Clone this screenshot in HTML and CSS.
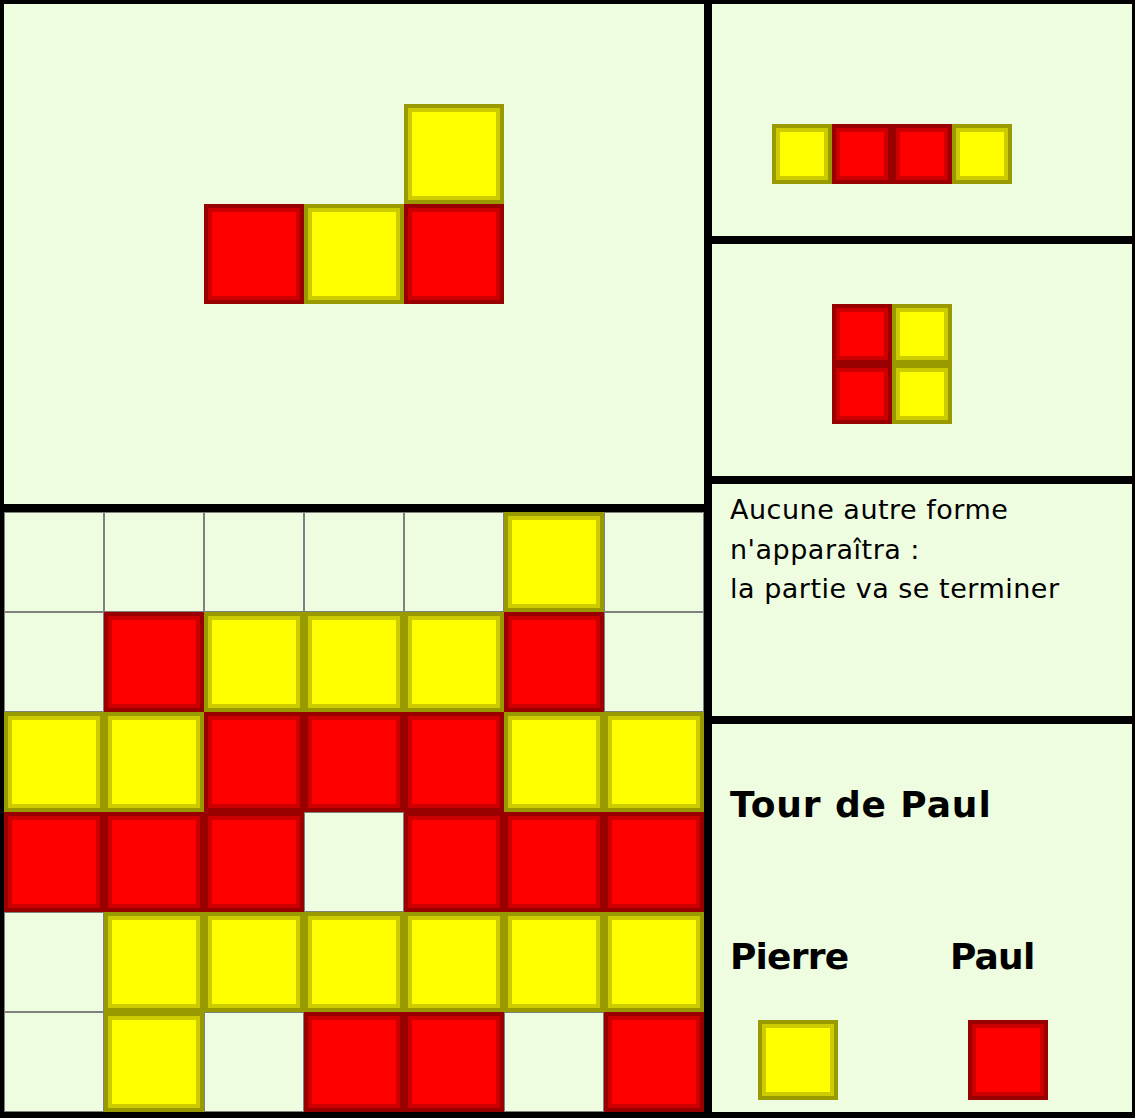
FILE: index.html
```html
<!DOCTYPE html>
<html lang="fr">
<head>
    <meta charset="UTF-8">
    <meta name="viewport" content="width=device-width, initial-scale=1.0">
    <title>Puissance Formes</title>
    <link rel="stylesheet" href="styles.css">
</head>
<body>
    <div class="window">
        <div class="left">
            <!-- forme courante -->
            <div class="panel current">
                <div class="tile yellow" style="grid-column: 5; grid-row: 2;"></div>
                <div class="tile red" style="grid-column: 3; grid-row: 3;"></div>
                <div class="tile yellow" style="grid-column: 4; grid-row: 3;"></div>
                <div class="tile red" style="grid-column: 5; grid-row: 3;"></div>
            </div>

            <!-- plateau -->
            <div class="panel board">
                <div class="cell"></div><div class="cell"></div><div class="cell"></div><div class="cell"></div><div class="cell"></div><div class="tile yellow"></div><div class="cell"></div>
                <div class="cell"></div><div class="tile red"></div><div class="tile yellow"></div><div class="tile yellow"></div><div class="tile yellow"></div><div class="tile red"></div><div class="cell"></div>
                <div class="tile yellow"></div><div class="tile yellow"></div><div class="tile red"></div><div class="tile red"></div><div class="tile red"></div><div class="tile yellow"></div><div class="tile yellow"></div>
                <div class="tile red"></div><div class="tile red"></div><div class="tile red"></div><div class="cell"></div><div class="tile red"></div><div class="tile red"></div><div class="tile red"></div>
                <div class="cell"></div><div class="tile yellow"></div><div class="tile yellow"></div><div class="tile yellow"></div><div class="tile yellow"></div><div class="tile yellow"></div><div class="tile yellow"></div>
                <div class="cell"></div><div class="tile yellow"></div><div class="cell"></div><div class="tile red"></div><div class="tile red"></div><div class="cell"></div><div class="tile red"></div>
            </div>
        </div>

        <div class="right">
            <!-- formes suivantes -->
            <div class="panel next">
                <div class="tile yellow" style="grid-column: 2; grid-row: 3;"></div>
                <div class="tile red" style="grid-column: 3; grid-row: 3;"></div>
                <div class="tile red" style="grid-column: 4; grid-row: 3;"></div>
                <div class="tile yellow" style="grid-column: 5; grid-row: 3;"></div>
            </div>

            <div class="panel next">
                <div class="tile red" style="grid-column: 3; grid-row: 2;"></div>
                <div class="tile yellow" style="grid-column: 4; grid-row: 2;"></div>
                <div class="tile red" style="grid-column: 3; grid-row: 3;"></div>
                <div class="tile yellow" style="grid-column: 4; grid-row: 3;"></div>
            </div>

            <div class="panel message">
                Aucune autre forme<br>
                n'apparaîtra :<br>
                la partie va se terminer
            </div>

            <div class="panel status">
                <div class="turn">Tour de Paul</div>
                <div class="players">
                    <div class="player player-first">
                        <div class="name">Pierre</div>
                        <div class="swatch yellow swatch-pierre"></div>
                    </div>
                    <div class="player">
                        <div class="name">Paul</div>
                        <div class="swatch red swatch-paul"></div>
                    </div>
                </div>
            </div>
        </div>
    </div>
</body>
</html>
```

FILE: styles.css
```css
body {
    margin: 0;
    padding: 0;
    background-color: #ffffff;
    font-family: 'DejaVu Sans', 'Liberation Sans', sans-serif;
    color: #000;
}

.window {
    display: flex;
    gap: 8px;
    width: 1128px;
    height: 1108px;
    padding: 4px 3px 6px 4px;
    background-color: #000;
}

.left, .right {
    display: flex;
    flex-direction: column;
    gap: 8px;
}

.left {
    width: 700px;
}

.right {
    width: 420px;
}

.panel {
    background-color: #eefcdf;
    overflow: hidden;
}

.current {
    height: 500px;
    display: grid;
    grid-template-columns: repeat(7, 100px);
    grid-template-rows: repeat(5, 100px);
}

.board {
    height: 600px;
    display: grid;
    grid-template-columns: repeat(7, 100px);
    grid-template-rows: repeat(6, 100px);
}

.next {
    height: 232px;
    display: grid;
    grid-template-columns: repeat(7, 60px);
    grid-template-rows: repeat(3, 60px);
}

.cell {
    box-sizing: border-box;
    border: 1px solid #808080;
}

.tile, .swatch {
    box-sizing: border-box;
    border: 4px solid;
}

.yellow {
    background-color: #ffff00;
    border-color: #999900;
    box-shadow: inset 0 0 0 4px #cccc00;
}

.red {
    background-color: #ff0000;
    border-color: #990000;
    box-shadow: inset 0 0 0 4px #cc0000;
}

.message {
    height: 232px;
    box-sizing: border-box;
    padding: 6px 18px 0;
    font-size: 27px;
    line-height: 39.5px;
    letter-spacing: 0.5px;
}

.status {
    flex: 1;
    padding: 0 18px;
    font-weight: bold;
    font-size: 36px;
    line-height: 36px;
}

.turn {
    margin-top: 63px;
    letter-spacing: 0.9px;
}

.players {
    display: flex;
    margin-top: 116px;
}

.player {
    flex: none;
}

.player-first {
    width: 220px;
}

.name {
    letter-spacing: -0.8px;
}

.swatch {
    width: 80px;
    height: 80px;
    margin-top: 45px;
}

.swatch-pierre {
    margin-left: 28px;
}

.swatch-paul {
    margin-left: 18px;
}
```
